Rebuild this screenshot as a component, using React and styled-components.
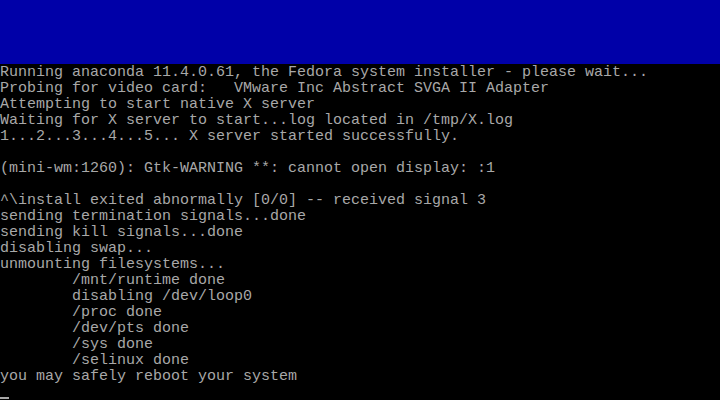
import React from "react";
import styled, { createGlobalStyle } from "styled-components";

const Global = createGlobalStyle`
  html, body { margin: 0; padding: 0; background: #000; }
  body { width: 720px; height: 400px; overflow: hidden; }
`;

const Screen = styled.div`
  width: 720px;
  height: 400px;
  background: #000;
  display: flex;
  flex-direction: column;
  overflow: hidden;
`;

const Banner = styled.div`
  height: 64px;
  flex: none;
  background: #0000a8;
`;

const Console = styled.div`
  display: flex;
  flex-direction: column;
  padding-top: 1px;
  font-family: "Liberation Mono", "DejaVu Sans Mono", monospace;
  font-size: 15px;
  line-height: 16px;
  color: #a8a8a8;
`;

const Line = styled.div`
  height: 16px;
  white-space: pre;
`;

const Cursor = styled.span`
  display: inline-block;
  width: 9px;
  height: 2px;
  background: #a8a8a8;
  margin-top: 12px;
  vertical-align: top;
`;

const lines = [
  "Running anaconda 11.4.0.61, the Fedora system installer - please wait...",
  "Probing for video card:   VMware Inc Abstract SVGA II Adapter",
  "Attempting to start native X server",
  "Waiting for X server to start...log located in /tmp/X.log",
  "1...2...3...4...5... X server started successfully.",
  "",
  "(mini-wm:1260): Gtk-WARNING **: cannot open display: :1",
  "",
  "^\\install exited abnormally [0/0] -- received signal 3",
  "sending termination signals...done",
  "sending kill signals...done",
  "disabling swap...",
  "unmounting filesystems...",
  "        /mnt/runtime done",
  "        disabling /dev/loop0",
  "        /proc done",
  "        /dev/pts done",
  "        /sys done",
  "        /selinux done",
  "you may safely reboot your system",
];

export default function App() {
  return (
    <Screen>
      <Global />
      <Banner />
      <Console>
        {lines.map((l, i) => (
          <Line key={i}>{l}</Line>
        ))}
        <Line>
          <Cursor />
        </Line>
      </Console>
    </Screen>
  );
}
